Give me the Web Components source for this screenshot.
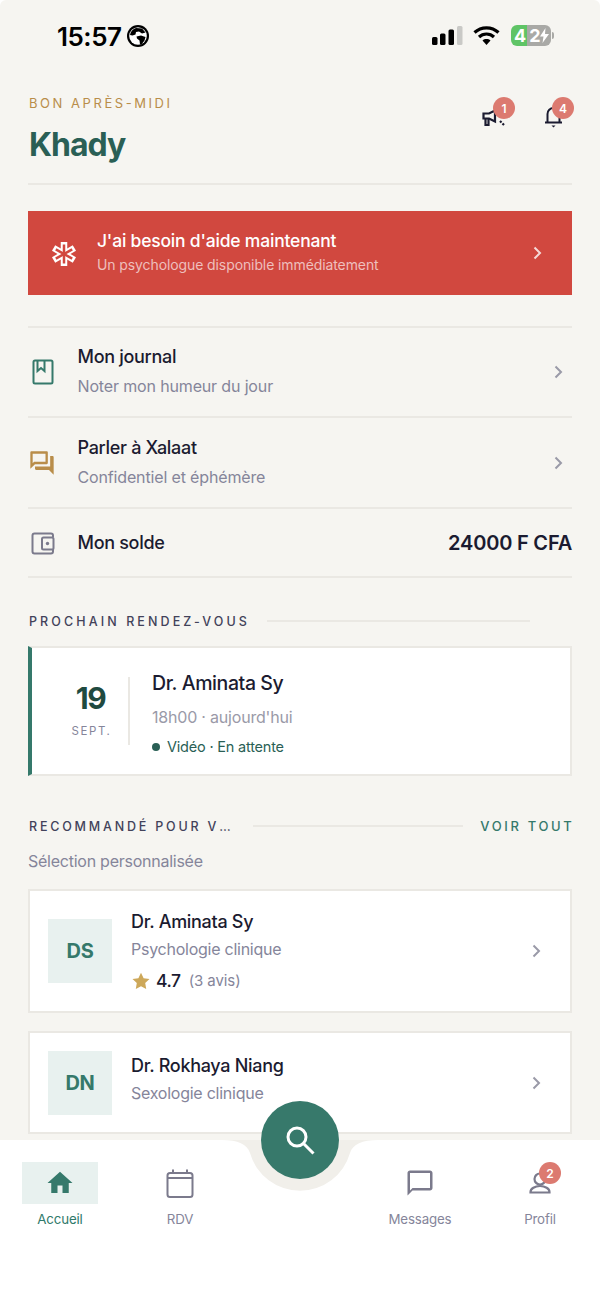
<!DOCTYPE html>
<html lang="fr">
<head>
<meta charset="utf-8">
<title>Accueil</title>
<style>
  html, body { margin: 0; padding: 0; background: #fff; }
  body { font-family: Inter, "Liberation Sans", sans-serif; }
</style>
</head>
<body>
<home-screen></home-screen>

<script>
// Small helper: every component is a shadow root with its own styles
const FONT = 'Inter, "Liberation Sans", sans-serif';
const LINE = '#eae8e3';

class Base extends HTMLElement {
  connectedCallback() {
    if (this.shadowRoot) return;
    this.attachShadow({ mode: 'open' }).innerHTML = this.render();
  }
  attr(name, fallback = '') {
    return this.getAttribute(name) ?? fallback;
  }
}

const CHEVRON = (color) => `<svg width="24" height="24" viewBox="0 0 24 24" fill="none" stroke="${color}" stroke-width="2" aria-hidden="true"><path d="M9.500 6.500 15 12l-5.500 5.500"/></svg>`;

const ICONS = {
  journal: `<svg width="28" height="28" viewBox="0 0 28 28" fill="none" stroke="#35796b" stroke-width="2"><rect x="5.500" y="2.500" width="19" height="23" rx="1.500"/><path d="M9.500 3v10l3.500-3 3.500 3V3"/></svg>`,
  chat: `<svg width="28" height="28" viewBox="0 0 24 24" fill="#b98d4a"><path d="M15 4v7H5.170l-.59.59-.58.58V4h11m1-2H3c-.55 0-1 .45-1 1v14l4-4h10c.55 0 1-.45 1-1V3c0-.55-.45-1-1-1zm5 4h-2v9H6v2c0 .55.45 1 1 1h11l4 4V7c0-.55-.45-1-1-1z"/></svg>`,
  wallet: `<svg width="28" height="28" viewBox="0 0 28 28" fill="none" stroke="#7b7a8c" stroke-width="2"><path d="M25 8V6.500a2 2 0 0 0-2-2H6.500a2 2 0 0 0-2 2v16a2 2 0 0 0 2 2H23a2 2 0 0 0 2-2V21"/><rect x="14" y="8.500" width="11.500" height="12" rx="1.500"/><circle cx="19.500" cy="14.500" r="1.700" fill="#7b7a8c" stroke="none"/></svg>`,
  megaphone: `<svg width="26" height="26" viewBox="0 0 26 26" fill="none" stroke="#1b1b30" stroke-width="2.200"><path d="M2.500 8.500H8l6-3v11l-6-3H2.500z"/><path d="M4.500 13.500V20H7.500V13.500"/><path d="m19 16 1.500 1.500M21.500 18.500l1.500 1.500"/></svg>`,
  bell: `<svg width="26" height="26" viewBox="0 0 26 26" fill="none" stroke="#1b1b30" stroke-width="2"><path d="M5 17.500h17"/><path d="M7.500 17.500V9a6 6 0 0 1 12 0v8.500"/><path d="M11.500 20.500h4l-2 2z" fill="#1b1b30" stroke="none"/></svg>`,
  home: `<svg width="30" height="30" viewBox="0 0 24 24" fill="#35796b"><path d="M10 20v-6h4v6h5v-8h3L12 3 2 12h3v8z"/></svg>`,
  calendar: `<svg width="30" height="30" viewBox="0 0 30 30" fill="none" stroke="#7b7a8c" stroke-width="2"><rect x="2.500" y="5" width="25" height="24" rx="2.500"/><path d="M2.500 10h25"/><path d="M8 1.500V5M22 1.500V5"/></svg>`,
  message: `<svg width="30" height="30" viewBox="0 0 24 24" fill="#7b7a8c"><path d="M20 2H4c-1.100 0-2 .9-2 2v18l4-4h14c1.100 0 2-.9 2-2V4c0-1.100-.9-2-2-2zm0 14H6l-2 2V4h16v12z"/></svg>`,
  person: `<svg width="30" height="30" viewBox="0 0 30 30" fill="none" stroke="#7b7a8c" stroke-width="2.200"><circle cx="15" cy="11" r="5.500"/><path d="M5.500 24.500V24c0-3.500 4.500-6 9.500-6s9.500 2.500 9.500 6v.5z"/></svg>`
};

class StatusBar extends Base {
  render() {
    return `
      <style>
        :host { display: flex; align-items: center; height: 72px; padding: 0 46px 0 57px; box-sizing: border-box; font-family: ${FONT}; color: #000; }
        .time { font-size: 26px; font-weight: 600; letter-spacing: -0.5px; margin-right: 6px; }
        .right { margin-left: auto; display: flex; align-items: center; margin-bottom: 2px; }
        .wifi { margin: 0 11px 0 10px; }
        .battery { position: relative; width: 40px; height: 21px; border-radius: 6px; overflow: hidden; background: linear-gradient(90deg, #5fc466 0 16px, #a9a9a6 16px); color: #fff; font-size: 18px; font-weight: 700; line-height: 21px; padding-left: 3px; box-sizing: border-box; letter-spacing: 3px; }
        .battery svg { position: absolute; right: 2px; top: 3px; }
        .nub { width: 2px; height: 7px; margin-left: 1px; background: #a9a9a6; border-radius: 0 2px 2px 0; }
      </style>
      <span class="time">15:57</span>
      <svg width="22" height="22" viewBox="0 0 22 22"><circle cx="11" cy="11" r="11" fill="#000"/><circle cx="11" cy="11" r="8.800" fill="#fff"/><path d="M3 10c.5-3.500 3-6 6-7l6 .5 3.500 4-3.500 1-3-2-3 .5-.5 2.500-3 1zM9.500 11.500l4.500-1 4.500 1.500-1 3.500-3 4h-1.500l-.5-4-2.500-2z" fill="#000"/></svg>
      <div class="right">
        <svg width="31" height="19" viewBox="0 0 31 19" fill="#000"><rect x="0" y="11" width="5.500" height="8" rx="1.500"/><rect x="8" y="7.500" width="5.500" height="11.500" rx="1.500"/><rect x="16.500" y="3.500" width="5.500" height="15.500" rx="1.500"/><rect x="25" y="0" width="5.500" height="19" rx="1.500" fill="#c9c9c6"/></svg>
        <svg class="wifi" width="27" height="20" viewBox="0 0 27 20" fill="none" stroke="#000" stroke-width="3.200"><path d="M1.500 7.500c6.800-6.300 17.200-6.300 24 0"/><path d="M6 12c4.200-4 10.800-4 15 0"/><path d="M13.500 20 9.500 15.500c2.300-1.900 5.700-1.900 8 0z" fill="#000" stroke="none"/></svg>
        <span class="battery">42<svg width="9" height="15" viewBox="0 0 9 15" fill="#fff"><path d="M5.500 0 0 8.500h3.500L2.500 15 9 6H5z"/></svg></span><span class="nub"></span>
      </div>`;
  }
}

class IconBadge extends Base {
  render() {
    return `
      <style>
        :host { display: block; position: relative; width: 26px; height: 26px; }
        svg { display: block; }
        b { position: absolute; left: 12px; top: -8px; width: 22px; height: 22px; border-radius: 50%; background: #dc7a70; color: #fff; font: 600 12px ${FONT}; display: flex; align-items: center; justify-content: center; }
      </style>
      ${ICONS[this.attr('icon')]}<b>${this.attr('count')}</b>`;
  }
}

class HomeHeader extends Base {
  render() {
    return `
      <style>
        :host { display: flex; justify-content: space-between; margin: 0 28px; height: 113px; box-sizing: border-box; padding-top: 23px; border-bottom: 2px solid ${LINE}; font-family: ${FONT}; }
        .hello { font-size: 13px; letter-spacing: 2.550px; color: #b98d4a; line-height: 17px; margin-left: 1px; }
        h1 { margin: 12px 0 0 1px; font-size: 32px; line-height: 42px; font-weight: 700; color: #2a5f55; letter-spacing: -1px; }
        .icons { display: flex; gap: 33px; margin: 10px 6px 0 0; height: 26px; }
      </style>
      <div><div class="hello">BON APRÈS-MIDI</div><h1>Khady</h1></div>
      <div class="icons"><icon-badge icon="megaphone" count="1"></icon-badge><icon-badge icon="bell" count="4"></icon-badge></div>`;
  }
}

class HelpBanner extends Base {
  render() {
    return `
      <style>
        :host { display: flex; align-items: center; height: 84px; margin: 26px 28px 0; background: #d1483f; color: #fff; font-family: ${FONT}; }
        .ico { width: 66px; padding-left: 3px; display: flex; justify-content: center; margin-top: 1px; }
        .txt { flex: 1; padding-bottom: 3px; }
        .t { font-size: 17.500px; font-weight: 500; line-height: 22px; letter-spacing: -0.2px; }
        .s { font-size: 14px; line-height: 18px; margin-top: 4px; color: rgba(255,255,255,.66); letter-spacing: -0.1px; }
        .chev { margin-right: 23px; display: flex; }
      </style>
      <span class="ico"><svg width="26" height="26" viewBox="0 0 26 26" fill="none">
        <g stroke="#fff" stroke-width="6.500"><path d="M13 1v24"/><path d="M2.600 7l20.800 12"/><path d="M2.600 19l20.800-12"/></g>
        <g stroke="#d1483f" stroke-width="2.500"><path d="M13 3.500v19"/><path d="M4.800 8.300l16.400 9.400"/><path d="M4.800 17.700l16.400-9.400"/></g>
      </svg></span>
      <div class="txt"><div class="t">J'ai besoin d'aide maintenant</div><div class="s">Un psychologue disponible immédiatement</div></div>
      <span class="chev">${CHEVRON('rgba(255,255,255,.8)')}</span>`;
  }
}

class MenuRow extends Base {
  render() {
    const sub = this.attr('sub');
    return `
      <style>
        :host { display: flex; align-items: center; box-sizing: border-box; border-bottom: 2px solid ${LINE}; font-family: ${FONT}; height: ${this.attr('height', '91')}px; }
        .ico { width: 49.500px; display: flex; }
        .ico svg { display: block; }
        .txt { flex: 1; padding-bottom: ${sub ? 3 : 0}px; }
        .t { font-size: 18px; font-weight: 500; color: #1b1b30; line-height: 24px; letter-spacing: -0.3px; }
        .s { font-size: 16px; color: #85859a; line-height: 20px; margin-top: 7px; letter-spacing: -0.15px; }
      </style>
      <span class="ico">${ICONS[this.attr('icon')]}</span>
      <div class="txt"><div class="t">${this.attr('title')}</div>${sub ? `<div class="s">${sub}</div>` : ''}</div>
      <slot>${CHEVRON('#9a9aa8').replace('<svg', '<svg style="margin-right:2px"')}</slot>`;
  }
}

class SectionTitle extends Base {
  render() {
    const link = this.attr('link');
    return `
      <style>
        :host { display: flex; align-items: center; margin: 0 28px 0 29px; height: 20px; font-family: ${FONT}; }
        .t { font-size: 12.500px; font-weight: 500; letter-spacing: ${link ? 2.8 : 3.1}px; color: #42425a; white-space: nowrap; }
        .t span { letter-spacing: 0; }
        i { display: block; flex: 1; height: 2px; background: ${LINE}; margin: 0 ${link ? 17 : 42}px 0 ${link ? 22 : 17}px; }
        a { font-size: 13px; font-weight: 500; letter-spacing: 2.650px; margin-right: -2.500px; color: #35796b; white-space: nowrap; }
      </style>
      <span class="t">${this.attr('title').replace('…', '<span>…</span>')}</span><i></i>${link ? `<a>${link}</a>` : ''}`;
  }
}

class ApptCard extends Base {
  render() {
    return `
      <style>
        :host { display: flex; height: 130px; margin: 15px 28px 0; box-sizing: border-box; background: #fff; border: 2px solid ${LINE}; border-left: 4px solid #35796b; font-family: ${FONT}; align-items: center; }
        .date { width: 98px; padding-left: 22px; box-sizing: border-box; height: 68px; border-right: 2px solid ${LINE}; text-align: center; }
        .d { font-size: 30px; font-weight: 700; color: #1f4a40; line-height: 36px; letter-spacing: -1.500px; padding-top: 3px; margin-left: -1px; }
        .m { font-size: 11.500px; color: #85859a; letter-spacing: 1.600px; margin: 7px 0 0 1px; line-height: 16px; }
        .info { padding: 4px 0 0 22px; }
        .n { font-size: 19.500px; font-weight: 500; color: #1b1b30; line-height: 24px; letter-spacing: -0.4px; }
        .h { font-size: 16px; color: #9a9aa8; line-height: 20px; margin-top: 12px; letter-spacing: -0.2px; }
        .v { font-size: 14.500px; color: #2a5f55; line-height: 18px; margin-top: 11px; letter-spacing: -0.2px; display: flex; align-items: center; gap: 7px; }
        .v i { width: 8px; height: 8px; border-radius: 50%; background: #2a5f55; }
      </style>
      <div class="date"><div class="d">${this.attr('day')}</div><div class="m">${this.attr('month')}</div></div>
      <div class="info"><div class="n">${this.attr('name')}</div><div class="h">${this.attr('when')}</div><div class="v"><i></i><span>${this.attr('mode')}</span></div></div>`;
  }
}

class DoctorCard extends Base {
  render() {
    const rating = this.attr('rating');
    return `
      <style>
        :host { display: flex; align-items: center; margin: 0 28px; box-sizing: border-box; background: #fff; border: 2px solid ${LINE}; font-family: ${FONT}; height: ${this.attr('height', '124')}px; padding: 0 22px 0 18px; }
        .av { width: 64px; height: 64px; background: #e8f1ef; color: #35796b; font-size: 20px; font-weight: 700; display: flex; align-items: center; justify-content: center; flex: none; letter-spacing: -0.3px; }
        .info { flex: 1; padding: ${rating ? 1 : 0}px 0 0 19px; margin-top: ${rating ? 0 : -7}px; }
        .n { font-size: 18px; font-weight: 500; color: #1b1b30; line-height: 22px; letter-spacing: -0.3px; }
        .s { font-size: 16px; color: #85859a; line-height: 20px; margin-top: 6px; letter-spacing: -0.25px; }
        .r { display: flex; align-items: center; margin-top: 11px; line-height: 22px; padding-left: 1px; }
        .r b { font-size: 17.500px; font-weight: 500; color: #1b1b30; margin: 0 8px 0 6px; letter-spacing: -0.4px; }
        .r span { font-size: 15px; color: #85859a; letter-spacing: -0.1px; }
        svg { display: block; flex: none; }
      </style>
      <div class="av">${this.attr('initials')}</div>
      <div class="info"><div class="n">${this.attr('name')}</div><div class="s">${this.attr('spec')}</div>
      ${rating ? `<div class="r"><svg width="18" height="18" viewBox="0 0 18 18" fill="#cda85a"><path d="M9 .8l2.600 5.400 5.900.8-4.300 4.100 1 5.900L9 14.200 3.800 17l1-5.900L.5 7l5.900-.8z"/></svg><b>${rating}</b><span>${this.attr('reviews')}</span></div>` : ''}</div>
      ${CHEVRON('#9a9aa8')}`;
  }
}

class NavItem extends Base {
  render() {
    const active = this.hasAttribute('active');
    const count = this.attr('count');
    return `
      <style>
        :host { display: flex; flex-direction: column; align-items: center; font-family: ${FONT}; }
        .pill { position: relative; width: 76px; height: 42px; display: flex; align-items: center; justify-content: center; background: ${active ? '#e8f1ef' : 'transparent'}; }
        .pill svg { display: block; }
        b { position: absolute; left: 37px; top: 0; width: 22px; height: 22px; border-radius: 50%; background: #dc7a70; color: #fff; font: 600 12px ${FONT}; display: flex; align-items: center; justify-content: center; }
        span { font-size: 13.300px; line-height: 18px; margin-top: 6px; color: ${active ? '#2f7a6a' : '#85859a'}; letter-spacing: -0.15px; }
      </style>
      <div class="pill">${ICONS[this.attr('icon')]}${count ? `<b>${count}</b>` : ''}</div>
      <span>${this.attr('label')}</span>`;
  }
}

class BottomNav extends Base {
  render() {
    return `
      <style>
        :host { display: grid; grid-template-columns: repeat(5, 120px); position: relative; background: #fff; height: 160px; padding-top: 22px; box-sizing: border-box; }
        .notch { position: absolute; left: 0; top: 0; display: block; }
        .fab { position: absolute; left: 261px; top: -39px; width: 78px; height: 78px; border-radius: 50%; background: #37796b; display: flex; align-items: center; justify-content: center; }
      </style>
      <svg class="notch" width="600" height="60" viewBox="0 0 600 60"><path d="M0 0H222C238 0 247 4 250 13A52 52 0 0 0 350 13C353 4 362 0 378 0H600V-1H0Z" fill="#f1efea"/></svg>
      <nav-item icon="home" label="Accueil" active></nav-item>
      <nav-item icon="calendar" label="RDV"></nav-item>
      <div></div>
      <nav-item icon="message" label="Messages"></nav-item>
      <nav-item icon="person" label="Profil" count="2"></nav-item>
      <div class="fab"><svg width="34" height="34" viewBox="0 0 34 34" fill="none" stroke="#fff" stroke-width="3"><circle cx="14" cy="14" r="9"/><path d="m21 21 9.500 9.500"/></svg></div>`;
  }
}

class HomeScreen extends Base {
  render() {
    return `
      <style>
        :host { display: flex; flex-direction: column; width: 600px; height: 1300px; overflow: hidden; background: #f6f5f1; border-radius: 6px 6px 0 0; font-family: ${FONT}; }
        main { height: 1140px; overflow: hidden; }
        .menu { margin: 31px 28px 0; border-top: 2px solid ${LINE}; }
        .val { font: 600 20px ${FONT}; color: #1b1b30; letter-spacing: -0.2px; }
        .sub { margin: 15px 28px 18px; font-size: 16px; line-height: 20px; color: #85859a; letter-spacing: -0.25px; }
        section-title.one { margin-top: 33px; }
        section-title.two { margin-top: 40px; }
        doctor-card + doctor-card { margin-top: 18px; }
      </style>
      <main>
        <status-bar></status-bar>
        <home-header></home-header>
        <help-banner></help-banner>
        <div class="menu">
          <menu-row icon="journal" title="Mon journal" sub="Noter mon humeur du jour" height="90"></menu-row>
          <menu-row icon="chat" title="Parler à Xalaat" sub="Confidentiel et éphémère"></menu-row>
          <menu-row icon="wallet" title="Mon solde" height="69"><span class="val">24000 F CFA</span></menu-row>
        </div>
        <section-title class="one" title="PROCHAIN RENDEZ-VOUS"></section-title>
        <appt-card day="19" month="SEPT." name="Dr. Aminata Sy" when="18h00 · aujourd'hui" mode="Vidéo · En attente"></appt-card>
        <section-title class="two" title="RECOMMANDÉ POUR V…" link="VOIR TOUT"></section-title>
        <div class="sub">Sélection personnalisée</div>
        <doctor-card initials="DS" name="Dr. Aminata Sy" spec="Psychologie clinique" rating="4.7" reviews="(3 avis)"></doctor-card>
        <doctor-card initials="DN" name="Dr. Rokhaya Niang" spec="Sexologie clinique" height="103"></doctor-card>
      </main>
      <bottom-nav></bottom-nav>`;
  }
}

customElements.define('status-bar', StatusBar);
customElements.define('icon-badge', IconBadge);
customElements.define('home-header', HomeHeader);
customElements.define('help-banner', HelpBanner);
customElements.define('menu-row', MenuRow);
customElements.define('section-title', SectionTitle);
customElements.define('appt-card', ApptCard);
customElements.define('doctor-card', DoctorCard);
customElements.define('nav-item', NavItem);
customElements.define('bottom-nav', BottomNav);
customElements.define('home-screen', HomeScreen);
</script>
</body>
</html>
